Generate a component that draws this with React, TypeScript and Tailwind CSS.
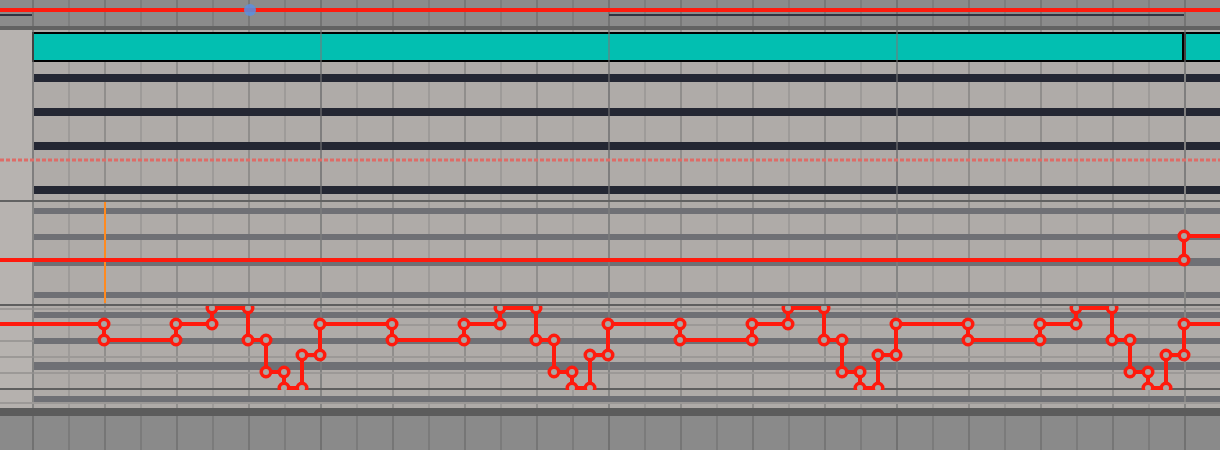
import React from 'react';

const MAIN_W = 1188;
const BEATS = Array.from({ length: 34 }, (_, k) => k);

type GridProps = {
    h: number,
    light: string,
    mid: string,
    strong: string,
    children?: React.ReactNode,
    overStrong?: string,
}

// beat grid of the arrangement, 36px per beat, bar lines every 8 beats
function Grid({ h, light, mid, strong, children, overStrong }: GridProps) {
    return (
        <svg width={MAIN_W} height={h} className="block shrink-0">
            {BEATS.map((k) => (
                <rect
                    key={k}
                    x={k * 36}
                    y={0}
                    width={2}
                    height={h}
                    fill={k % 8 === 0 ? strong : k % 2 === 0 ? mid : light}
                />
            ))}
            {children}
            {overStrong && BEATS.filter((k) => k % 8 === 0).map((k) => (
                <rect key={'o' + k} x={k * 36} y={0} width={2} height={h}
                    fill={overStrong} />
            ))}
        </svg>
    );
}

function Bar({ y, h, fill }: { y: number, h: number, fill: string }) {
    // bars break at the clip boundary (beat 32)
    return (
        <>
            <rect x={2} y={y} width={1150} height={h} fill={fill} />
            <rect x={1154} y={y} width={MAIN_W - 1154} height={h} fill={fill} />
        </>
    );
}

const LANE = { light: '#9e9b99', mid: '#908e8c', strong: '#878685' };
const NOTE = '#242733';
const GRAYBAR = '#6f7075';
const RED = '#ff1a0d';

function stepPoints() {
    const pts: [number, number][] = [[0, 324]];
    for (let k = 0; k < 4; k++) {
        const p = 104 + 288 * k;
        pts.push(
            [p, 324], [p, 340], [p + 72, 340], [p + 72, 324],
            [p + 108, 324], [p + 108, 308], [p + 144, 308], [p + 144, 340],
            [p + 162, 340], [p + 162, 372], [p + 180, 372], [p + 180, 388],
            [p + 198, 388], [p + 198, 355], [p + 216, 355], [p + 216, 324],
        );
    }
    pts.push([1220, 324]);
    return pts;
}

function Node({ x, y }: { x: number, y: number }) {
    return <circle cx={x} cy={y} r={4.75} fill="#aaa6a3" stroke={RED} strokeWidth={3.5} />;
}

function Envelopes() {
    const pts = stepPoints();
    const d = pts.map(([x, y], i) => (i === 0 ? 'M' : 'L') + x + ' ' + y).join(' ');
    return (
        <svg width={1220} height={450} className="absolute inset-0 pointer-events-none">
            <defs>
                <clipPath id="laneD">
                    <rect x={0} y={306} width={1220} height={84} />
                </clipPath>
            </defs>
            {/* top lane */}
            <rect x={0} y={8} width={1220} height={4} fill={RED} />
            <circle cx={250} cy={10} r={6} fill="#5b8fe0" opacity={0.85} />

            {/* dotted marker */}
            <line x1={0} y1={160} x2={1220} y2={160} stroke="#de6c67"
                strokeWidth={3} strokeDasharray="4 2" />

            {/* orange cursor */}
            <rect x={104} y={202} width={2} height={101} fill="#ff8a1f" />

            {/* middle envelope */}
            <path d="M0 260 H1184 V236 H1220" fill="none" stroke={RED} strokeWidth={4} />
            <Node x={1184} y={260} />
            <Node x={1184} y={236} />

            {/* step envelope */}
            <g clipPath="url(#laneD)">
                <path d={d} fill="none" stroke={RED} strokeWidth={4} />
                {pts.slice(1, -1).map(([x, y], i) => <Node key={i} x={x} y={y} />)}
            </g>
        </svg>
    );
}

export default function App() {
    return (
        <div className="relative w-[1220px] h-[450px] overflow-hidden bg-[#8b8b8b] flex flex-col">
            {/* top automation row */}
            <div className="h-[26px] flex shrink-0 bg-[#8b8b8b]">
                <div className="w-8 shrink-0 flex flex-col">
                    <div className="h-[14px]" />
                    <div className="h-[2px] bg-[#2f3240]" />
                </div>
                <Grid h={26} light="#7e7e7e" mid="#787878" strong="#747474">
                    <rect x={577} y={14} width={575} height={2} fill="#2f3240" />
                </Grid>
            </div>
            <div className="h-1 shrink-0 bg-[#626262]" />

            {/* midi track */}
            <div className="h-[170px] flex shrink-0 bg-[#afaba8]">
                <div className="w-8 shrink-0 bg-[#b7b3b0]" />
                <Grid h={170} {...LANE} overStrong="rgba(120,120,120,0.55)">
                    <rect x={0} y={2} width={1154} height={30} fill="#000" />
                    <rect x={2} y={4} width={1148} height={26} fill="#02bfb1" />
                    <rect x={1152} y={2} width={MAIN_W - 1152} height={30} fill="#000" />
                    <rect x={1154} y={4} width={MAIN_W - 1154} height={26} fill="#02bfb1" />
                    <Bar y={44} h={8} fill={NOTE} />
                    <Bar y={78} h={8} fill={NOTE} />
                    <Bar y={112} h={8} fill={NOTE} />
                    <Bar y={156} h={8} fill={NOTE} />
                </Grid>
            </div>
            <div className="h-[2px] shrink-0 bg-[#626262]" />

            {/* automation lane */}
            <div className="h-[102px] flex shrink-0 bg-[#afaba8]">
                <div className="w-8 shrink-0 bg-[#b7b3b0]" />
                <Grid h={102} {...LANE} overStrong="rgba(130,130,130,0.5)">
                    <Bar y={6} h={6} fill={GRAYBAR} />
                    <Bar y={32} h={6} fill={GRAYBAR} />
                    <Bar y={56} h={8} fill={GRAYBAR} />
                    <Bar y={90} h={6} fill={GRAYBAR} />
                </Grid>
            </div>
            <div className="h-[2px] shrink-0 bg-[#5f5f5f]" />

            {/* step automation lane */}
            <div className="h-[82px] flex shrink-0 bg-[#afaba8]">
                <div className="w-8 shrink-0 bg-[#b7b3b0] flex flex-col">
                    <div className="h-[2px]" />
                    <div className="h-[2px] bg-[#9c9997]" />
                    <div className="h-[14px]" />
                    <div className="h-[2px] bg-[#9c9997]" />
                    <div className="h-[14px]" />
                    <div className="h-[2px] bg-[#9c9997]" />
                    <div className="h-[14px]" />
                    <div className="h-[2px] bg-[#9c9997]" />
                    <div className="h-[14px]" />
                    <div className="h-[2px] bg-[#9c9997]" />
                </div>
                <Grid h={82} {...LANE} overStrong="rgba(130,130,130,0.5)">
                    {[2, 18, 34, 50, 66].map((y) => (
                        <rect key={y} x={0} y={y} width={MAIN_W} height={2} fill="#9c9997" />
                    ))}
                    <Bar y={6} h={6} fill={GRAYBAR} />
                    <Bar y={32} h={6} fill={GRAYBAR} />
                    <Bar y={56} h={8} fill={GRAYBAR} />
                </Grid>
            </div>
            <div className="h-[2px] shrink-0 bg-[#5f5f5f]" />

            <div className="h-[18px] flex shrink-0 bg-[#afaba8]">
                <div className="w-8 shrink-0 bg-[#b5b1ae] flex flex-col">
                    <div className="h-3" />
                    <div className="h-[2px] bg-[#9c9997]" />
                </div>
                <Grid h={18} {...LANE}>
                    <Bar y={6} h={6} fill={GRAYBAR} />
                    <rect x={0} y={12} width={MAIN_W} height={2} fill="#9c9997" />
                </Grid>
            </div>
            <div className="h-2 shrink-0 bg-[#5c5c5c]" />

            {/* empty area */}
            <div className="flex-1 flex bg-[#8a8a8a]">
                <div className="w-8 shrink-0" />
                <Grid h={34} light="#7b7b7b" mid="#767676" strong="#717171" />
            </div>

            <Envelopes />
        </div>
    );
}
